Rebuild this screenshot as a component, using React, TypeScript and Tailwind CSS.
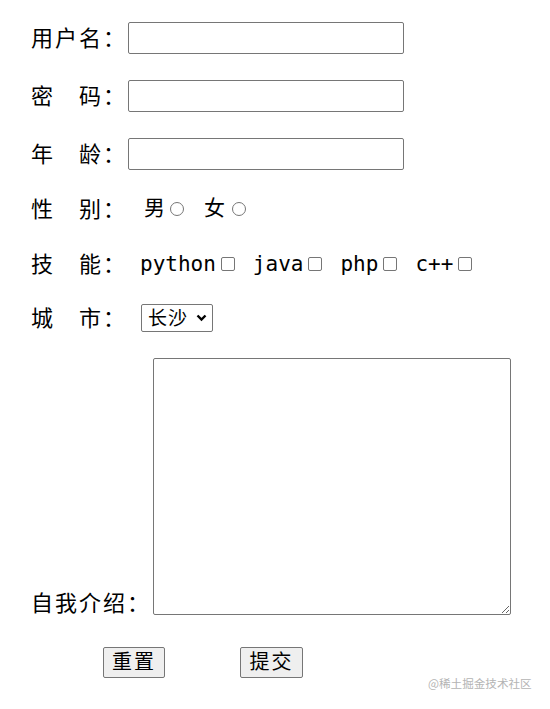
const cjk = "font-['Noto_Sans_CJK_SC',sans-serif]";
const mono = "font-['DejaVu_Sans_Mono',monospace]";

function Label({ text }: { text: string }) {
  return (
    <span className={`${cjk} w-[97px] shrink-0 pb-[5px] text-[22px] leading-none tracking-[2px] text-black`}>
      {text}
    </span>
  );
}

function Radio() {
  return <span className="inline-block h-[14px] w-[14px] shrink-0 rounded-full border border-[#767676] bg-white" />;
}

function Check() {
  return <span className="inline-block h-[14px] w-[14px] shrink-0 rounded-[2px] border border-[#767676] bg-white" />;
}

const skills = ["python", "java", "php", "c++"];

export default function App() {
  return (
    <div className="relative h-[709px] w-[550px] bg-white">
      <form className="flex flex-col pl-[31px] pt-[22px]">
        <div className="flex h-[32px] items-center">
          <Label text="用户名：" />
          <input className="h-[32px] w-[276px] rounded-[2px] border border-[#767676] bg-white" />
        </div>
        <div className="mt-[26px] flex h-[32px] items-center">
          <Label text="密　码：" />
          <input type="password" className="h-[32px] w-[276px] rounded-[2px] border border-[#767676] bg-white" />
        </div>
        <div className="mt-[26px] flex h-[32px] items-center">
          <Label text="年　龄：" />
          <input className="h-[32px] w-[276px] rounded-[2px] border border-[#767676] bg-white" />
        </div>

        <div className="mt-[23px] flex h-[32px] items-center">
          <Label text="性　别：" />
          <span className={`${cjk} ml-[16px] pb-[5px] text-[21px] leading-none`}>男</span>
          <span className="ml-[5px] flex"><Radio /></span>
          <span className={`${cjk} ml-[20px] pb-[5px] text-[21px] leading-none`}>女</span>
          <span className="ml-[7px] flex"><Radio /></span>
        </div>

        <div className="mt-[23px] flex h-[32px] items-center">
          <Label text="技　能：" />
          <div className="ml-[12px] flex items-center gap-[18px]">
            {skills.map((s) => (
              <span key={s} className="flex items-center gap-[5px]">
                <span className={`${mono} text-[21px] leading-none text-black`}>{s}</span>
                <Check />
              </span>
            ))}
          </div>
        </div>

        <div className="mt-[22px] flex h-[32px] items-center">
          <Label text="城　市：" />
          <div className="ml-[13px] flex h-[28px] w-[72px] items-center justify-between rounded-[2px] border border-[#767676] bg-white pl-[6px] pr-[5px]">
            <span className={`${cjk} pb-[3px] text-[19px] leading-none tracking-[1px]`}>长沙</span>
            <svg width="11" height="8" viewBox="0 0 11 8">
              <path d="M1.5 1.5 L5.5 5.5 L9.5 1.5" fill="none" stroke="#000" strokeWidth="2.4" />
            </svg>
          </div>
        </div>

        <div className="mt-[24px] flex items-end">
          <span className={`${cjk} w-[122px] shrink-0 pb-[3px] text-[22px] leading-none tracking-[2px]`}>
            自我介绍：
          </span>
          <textarea className="h-[257px] w-[358px] rounded-[2px] border border-[#767676] bg-white" />
        </div>

        <div className="mt-[32px] flex items-center pl-[72px]">
          <button
            type="button"
            className={`${cjk} h-[31px] w-[62px] rounded-[2px] border border-[#767676] bg-[#efefef] pb-[3px] text-[20px] leading-none tracking-[2px]`}
          >
            重置
          </button>
          <button
            type="button"
            className={`${cjk} ml-[75px] h-[31px] w-[63px] rounded-[2px] border border-[#767676] bg-[#efefef] pb-[3px] text-[20px] leading-none tracking-[2px]`}
          >
            提交
          </button>
        </div>
      </form>
      <span className={`${cjk} absolute left-[428px] top-[678px] text-[11.6px] leading-none text-[#b4b4b4]`}>
        @稀土掘金技术社区
      </span>
    </div>
  );
}
